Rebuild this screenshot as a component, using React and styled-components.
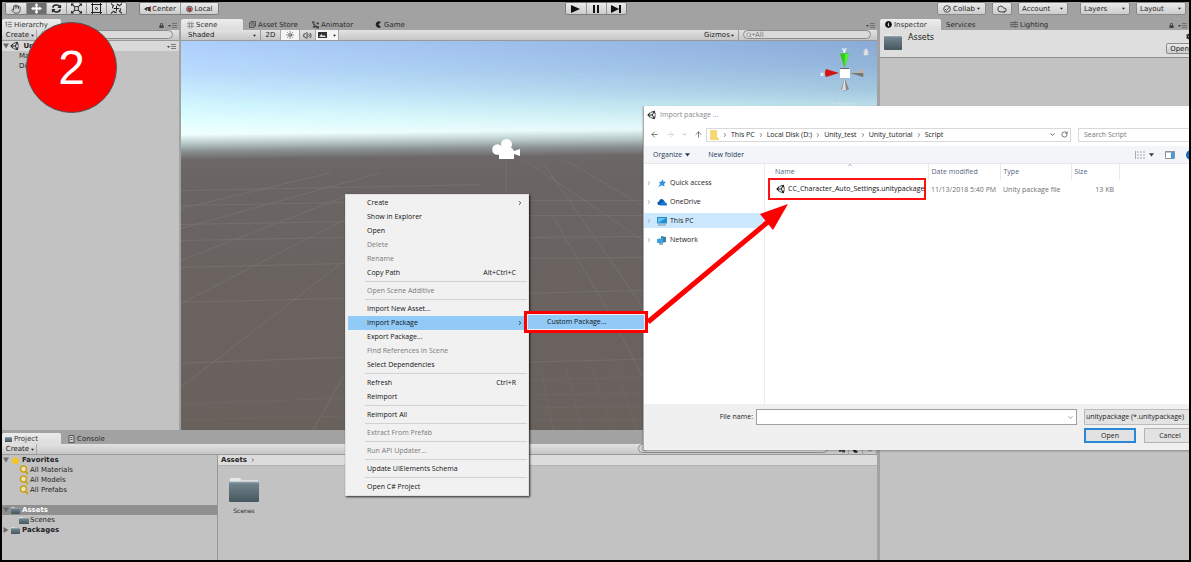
import React from "react";
import styled, { createGlobalStyle } from "styled-components";
import { FaUnity, FaStar, FaLock, FaCog, FaInfoCircle } from "react-icons/fa";
import { Hand, Cloud, ChevronRight, ChevronDown, ChevronUp, ArrowLeft, ArrowRight, ArrowUp, RotateCw, Search, Sun, Volume2 } from "lucide-react";

const GlobalStyle = createGlobalStyle`
  * {
    box-sizing: border-box;
  }
  body {
    margin: 0;
    background: black;
  }
  button, input, select {
    font: inherit;
    color: inherit;
    margin: 0;
    padding: 0;
    border: none;
    background: none;
  }
  svg {
    display: block;
    flex: none;
  }
`;

const Frame = styled.div`
  position: relative;
  display: flex;
  flex-direction: column;
  height: 100vh;
  min-height: 500px;
  border: 2px solid black;
  overflow: hidden;
  background: #a2a2a2;
  color: #222;
  font: 7px/10px "DejaVu Sans", sans-serif;
  white-space: nowrap;
`;

/* ---------- editor chrome ---------- */

const MainBar = styled.header`
  display: grid;
  grid-template-columns: 1fr auto 1fr;
  height: 17px;
  padding: 0 3px 4px 3px;
`;

const BarSide = styled.div`
  display: flex;
  gap: ${({ gap }) => gap}px;
  justify-content: ${({ end }) => (end ? "flex-end" : "flex-start")};
`;

const Segments = styled.div`
  display: flex;
  border: 1px solid #7c7c7c;
  border-radius: 2px;
  overflow: hidden;
`;

const Segment = styled.button`
  display: flex;
  align-items: center;
  justify-content: center;
  gap: 1px;
  width: ${({ w }) => w || 20}px;
  color: #222;
  background: ${({ on }) => (on ? "#6e6e6e" : "linear-gradient(#eaeaea, #cdcdcd)")};
  & + & {
    border-left: 1px solid #979797;
  }
`;

const RoundButton = styled.button`
  display: flex;
  align-items: center;
  justify-content: center;
  gap: 2px;
  width: ${({ w }) => w}px;
  height: ${({ h }) => h || 13}px;
  border: 1px solid #8a8a8a;
  border-radius: 2px;
  background: linear-gradient(#eaeaea, #cdcdcd);
`;

const SelectBox = styled.label`
  display: flex;
  align-items: center;
  width: ${({ w }) => w}px;
  padding: 0 4px 0 3px;
  ${({ flat }) =>
    flat
      ? "border-right: 1px solid #9a9a9a;"
      : "border: 1px solid #8a8a8a; border-radius: 2px; background: linear-gradient(#eaeaea, #cdcdcd);"}
  select {
    flex: 1;
    min-width: 0;
    appearance: none;
    outline: none;
  }
`;

const Workspace = styled.main`
  flex: 1;
  display: flex;
  gap: 3px;
  min-height: 0;
`;

const LeftArea = styled.div`
  flex: 1;
  min-width: 0;
  display: flex;
  flex-direction: column;
  gap: 3px;
`;

const TopArea = styled.div`
  flex: 1;
  display: flex;
  gap: 2px;
  min-height: 0;
`;

const Panel = styled.section`
  display: flex;
  flex-direction: column;
  min-width: 0;
  background: #c2c2c2;
  flex: ${({ basis }) => (basis ? `0 0 ${basis}px` : 1)};
`;

const TabStrip = styled.div`
  display: flex;
  align-items: stretch;
  height: 11px;
  background: #a2a2a2;
`;

const Tab = styled.button`
  display: flex;
  align-items: center;
  gap: 2px;
  width: ${({ w }) => w}px;
  padding: 0 ${({ pad }) => pad || 4}px;
  border-radius: 2px 2px 0 0;
  color: ${({ on }) => (on ? "#333" : "#2c2c2c")};
  background: ${({ on }) => (on ? "linear-gradient(#ececec, #dcdcdc)" : "none")};
`;

const TabTools = styled.div`
  display: flex;
  align-items: flex-end;
  gap: 4px;
  margin-left: auto;
  padding: 0 2px 2px;
  color: #444;
`;

const ToolRow = styled.div`
  display: flex;
  align-items: stretch;
  height: 11px;
  padding-left: ${({ pad }) => pad || 2}px;
  background: linear-gradient(#e2e2e2, #c6c6c6);
  border-bottom: 1px solid #999;
`;

const ToolButton = styled.button`
  display: flex;
  align-items: center;
  justify-content: center;
  gap: 2px;
  width: ${({ w }) => w}px;
  border-right: 1px solid #a5a5a5;
  background: ${({ on }) => (on ? "#f5f5f5" : "none")};
`;

const Fill = styled.div`
  flex: 1;
`;

const SearchField = styled.label`
  display: flex;
  align-items: center;
  flex: ${({ w }) => (w ? `0 0 ${w}px` : 1)};
  height: 9px;
  margin: 0 6px 0 4px;
  padding: 0 4px 0 2px;
  border: 1px solid #8c8c8c;
  border-radius: 5px;
  background: #dadada;
  color: #777;
  input {
    flex: 1;
    min-width: 0;
    height: 7px;
    outline: none;
  }
`;

const TreeRow = styled.div`
  display: flex;
  align-items: center;
  gap: ${({ bold }) => (bold ? 2 : 1)}px;
  height: 10px;
  padding-left: ${({ depth }) => (depth ? 17 : 1)}px;
  font-weight: ${({ bold }) => (bold ? "bold" : "normal")};
  color: ${({ on }) => (on ? "#fff" : "#222")};
  background: ${({ on }) => (on ? "#8f8f8f" : "none")};
`;

const SceneRow = styled(TreeRow)`
  justify-content: space-between;
  padding-right: 3px;
  background: #d9d9d9;
  span {
    display: flex;
    align-items: center;
    gap: 1px;
  }
`;

const SceneView = styled.div`
  position: relative;
  flex: 1;
  min-height: 0;
  overflow: hidden;
  background: #69615d;
`;

const SceneArt = styled.svg`
  width: 100%;
  height: 100%;
`;

const Gizmo = styled.svg`
  position: absolute;
  top: 5px;
  right: 1px;
`;

const CameraGizmo = styled.svg`
  position: absolute;
  left: 311px;
  top: 98px;
`;

const ProjectPanel = styled.section`
  display: flex;
  flex-direction: column;
  background: #c2c2c2;
`;

const ProjectBody = styled.div`
  display: flex;
  height: 105px;
`;

const ProjectTree = styled.div`
  width: 216px;
  border-right: 1px solid #969696;
`;

const Spacer = styled.div`
  height: 10px;
`;

const ProjectFiles = styled.div`
  flex: 1;
`;

const Breadcrumb = styled.div`
  display: flex;
  align-items: center;
  gap: 4px;
  height: 11px;
  padding-left: 3px;
  font-weight: bold;
  background: #dcdcdc;
  border-bottom: 1px solid #b2b2b2;
`;

const FolderTile = styled.button`
  display: flex;
  flex-direction: column;
  align-items: center;
  gap: 4px;
  margin: 11px 0 0 11px;
  font-size: 6px;
`;

const InspectorHead = styled.div`
  display: flex;
  gap: 6px;
  height: 28px;
  padding: 3px 0 0 4px;
  background: #dedede;
  border-bottom: 1px solid #8d8d8d;
  font-size: 8px;
`;

const HeadActions = styled.div`
  display: flex;
  flex-direction: column;
  align-items: flex-end;
  gap: 3px;
  margin: 0 -4px 0 auto;
  font-size: 7px;
`;

/* ---------- context menu ---------- */

const Menu = styled.ul`
  position: absolute;
  left: 343px;
  top: 192px;
  width: 184px;
  margin: 0;
  padding: 1px 1px 1px 2px;
  list-style: none;
  background: #f1f1f1;
  border: 1px solid #e0e0e0;
  box-shadow: 1px 1px 2px rgba(0, 0, 0, 0.8);
  font: 7px/14px "Open Sans", sans-serif;
`;

const MenuItem = styled.button`
  display: flex;
  align-items: center;
  width: 100%;
  height: 14px;
  padding: 0 4px 0 19px;
  text-align: left;
  color: #111;
  background: ${({ on }) => (on ? "#91c9f7" : "none")};
  &:disabled {
    color: #7b7b7b;
  }
  kbd {
    margin: 0 7px 0 auto;
    font: inherit;
  }
  svg {
    margin-left: auto;
  }
`;

const Divider = styled.li`
  height: 4px;
  margin-left: 17px;
  background: linear-gradient(#f1f1f1 1px, #d2d2d2 1px, #d2d2d2 2px, #f1f1f1 2px);
`;

const SubMenu = styled.div`
  position: absolute;
  left: 522px;
  top: 309px;
  width: 124px;
  padding: 1px;
  border: 3px solid #fd0000;
  background: #f1f1f1;
  font: 7px/14px "Open Sans", sans-serif;
`;

/* ---------- file dialog ---------- */

const Dialog = styled.section`
  position: absolute;
  left: 641px;
  right: -20px;
  top: 104px;
  border-left: 1px solid #aaa;
  background: white;
  color: #222;
  font: 7px/12px "Open Sans", sans-serif;
  box-shadow: 0 1px 2px rgba(0, 0, 0, 0.3);
`;

const DialogTitle = styled.h2`
  display: flex;
  align-items: center;
  gap: 3px;
  height: 18px;
  margin: 0;
  padding-left: 3px;
  font-size: 7px;
  font-weight: normal;
  color: #888;
  svg {
    color: #222;
  }
`;

const AddressRow = styled.div`
  display: flex;
  align-items: center;
  height: 22px;
  padding-left: 6px;
  padding-bottom: 1px;
`;

const NavArrows = styled.div`
  display: flex;
  align-items: center;
  justify-content: space-between;
  width: 53px;
  margin-right: 3px;
  color: #555;
`;

const PathBox = styled.nav`
  flex: 1;
  display: flex;
  align-items: center;
  gap: 3px;
  height: 14px;
  padding: 0 2px 0 3px;
  border: 1px solid #d9d9d9;
`;

const PathTools = styled.div`
  display: flex;
  gap: 5px;
  margin-left: auto;
`;

const DialogSearch = styled.input`
  width: 131px;
  height: 14px;
  margin-left: 7px;
  padding: 0 5px;
  border: 1px solid #d9d9d9;
  &::placeholder {
    color: #777;
    opacity: 1;
  }
`;

const CommandBar = styled.div`
  display: flex;
  align-items: center;
  gap: 18px;
  height: 18px;
  padding: 0 13px 0 9px;
  background: #f3f5f8;
  border-bottom: 1px solid #e6e8ec;
  color: #23395b;
  button {
    display: flex;
    align-items: center;
    gap: 3px;
  }
`;

const ViewTools = styled.div`
  display: flex;
  align-items: center;
  gap: 11px;
  margin-left: auto;
`;

const DialogBody = styled.div`
  display: flex;
  height: 240px;
`;

const Places = styled.nav`
  display: flex;
  flex-direction: column;
  gap: 4px;
  width: 121px;
  padding-top: 11px;
  border-right: 1px solid #ececec;
`;

const Place = styled.button`
  display: flex;
  align-items: center;
  gap: 3px;
  height: 15px;
  padding-left: 2px;
  background: ${({ on }) => (on ? "#cce8ff" : "none")};
  svg:first-child {
    color: #888;
    margin-right: 2px;
  }
`;

const FileTable = styled.table`
  align-self: flex-start;
  width: 354px;
  table-layout: fixed;
  border-collapse: collapse;
  color: #707070;
  th {
    height: 16px;
    padding: 0 0 0 3px;
    text-align: left;
    font-weight: normal;
    color: #53657e;
    border-right: 1px solid #e8e8e8;
  }
  th:first-child {
    padding-left: 10px;
  }
  td {
    padding: 0 0 0 3px;
  }
  td:last-child {
    padding-right: 5px;
    text-align: right;
  }
`;

const SortHead = styled.div`
  position: relative;
  svg {
    position: absolute;
    left: 72px;
    top: -4px;
  }
`;

const FileName = styled.div`
  display: flex;
  align-items: center;
  gap: 2px;
  height: 22px;
  margin: -2px 2px 0 0;
  padding-left: 6px;
  border: 2px solid #f11;
  color: #111;
`;

const DialogFooter = styled.footer`
  display: grid;
  grid-template-columns: 112px 1fr 125px;
  align-items: center;
  gap: 3px 0;
  height: 46px;
  padding: 5px 0 7px;
  background: #f0f0f0;
  label {
    padding-right: 3px;
    text-align: right;
  }
`;

const FileInput = styled.div`
  display: flex;
  align-items: center;
  height: 16px;
  margin-right: 7px;
  padding: 0 2px;
  border: 1px solid #a0a0a0;
  background: white;
  input {
    flex: 1;
    outline: none;
  }
`;

const TypeSelect = styled.select`
  height: 16px;
  padding-left: 1px;
  border: 1px solid #bbb;
  background: #e3e3e3;
  appearance: none;
`;

const DialogButtons = styled.div`
  grid-column: 3;
  display: flex;
  gap: 8px;
`;

const DialogButton = styled.button`
  width: 52px;
  height: 15px;
  border: ${({ main }) => (main ? "2px solid #2b86d6" : "1px solid #b4b4b4")};
  background: #e2e2e2;
  line-height: 10px;
`;

/* ---------- annotations ---------- */

const StepBadge = styled.div`
  position: absolute;
  left: 24px;
  top: 20px;
  width: 91px;
  height: 91px;
  border: 1px solid #555;
  border-radius: 50%;
  background: #fd0000;
  color: white;
  font: 48px/90px "Liberation Sans", sans-serif;
  text-align: center;
`;

const Arrow = styled.svg`
  position: absolute;
  left: 644px;
  top: 200px;
`;

/* ---------- drawings ---------- */

const Caret = ({ size = 3 }) => (
  <svg width={size} height={size} viewBox="0 0 4 4">
    <path d="M0 1h4L2 3.5z" fill="currentColor" />
  </svg>
);

const Triangle = ({ open }) => (
  <svg width="6" height="6" viewBox="0 0 6 6">
    <path d={open ? "M0 .5h6L3 5.5z" : "M.5 0v6l5-3z"} fill="#6c6c6c" />
  </svg>
);

const PanelMenu = () => (
  <svg width="9" height="5" viewBox="0 0 9 5">
    <path d="M0 2h3L1.500 4z" fill="#444" />
    <path d="M4 .5h5M4 2.500h5M4 4.500h5" stroke="#666" strokeWidth=".8" />
  </svg>
);

const Folder = ({ w, h }) => (
  <svg width={w} height={h} viewBox="0 0 30 24" preserveAspectRatio="none">
    <defs>
      <linearGradient id="folder" x1="0" y1="0" x2="0" y2="1">
        <stop offset="0" stopColor="#748790" />
        <stop offset="1" stopColor="#46565f" />
      </linearGradient>
    </defs>
    <path d="M1 5V2q0-1 1-1h9l2 2h15q1 0 1 1v4H1z" fill="#e6e8e8" />
    <rect y="4.500" width="30" height="19.500" rx="1.500" fill="url(#folder)" />
    <path d="M1 5.500h28" stroke="#8fa0a8" />
  </svg>
);

const Lens = () => (
  <svg width="10" height="10" viewBox="0 0 10 10" fill="none">
    <circle cx="4.500" cy="4" r="3" fill="#eee5b8" stroke="#c9a21a" strokeWidth="1.500" />
    <path d="M6.500 6.500L9 9" stroke="#c9a21a" strokeWidth="1.800" />
  </svg>
);

const toolIcons = {
  move: (
    <svg width="11" height="11" viewBox="0 0 12 12">
      <path d="M6 0l2.200 2.800H7V5h2.200V3.800L12 6 9.200 8.200V7H7v2.200h1.200L6 12 3.800 9.200H5V7H2.800v1.200L0 6l2.800-2.200V5H5V2.800H3.800z" fill="#fff" />
    </svg>
  ),
  rotate: (
    <svg width="11" height="11" viewBox="0 0 12 12" fill="none" stroke="#222" strokeWidth="1.800">
      <path d="M2 5C2.500 1.800 7.500 1.200 9.500 3.800M10 7C9.500 10.200 4.500 10.800 2.500 8.200" />
      <path d="M11 1.500v4H7zM1 10.500v-4h4z" fill="#222" stroke="none" />
    </svg>
  ),
  scale: (
    <svg width="11" height="11" viewBox="0 0 12 12" fill="none" stroke="#222">
      <rect x="4" y="4" width="4" height="4" />
      <path d="M1 1.500l3 2.500M11 1.500L8 4M1 10.500l3-2.500M11 10.500L8 8" strokeWidth="1.200" />
      <path d="M0 .5h3.500L0 3.500zM12 .5H8.500L12 3.500zM0 11.500h3.500L0 8.500zM12 11.500H8.500L12 8.500z" fill="#222" stroke="none" />
    </svg>
  ),
  rect: (
    <svg width="11" height="11" viewBox="0 0 11 11" fill="none" stroke="#222">
      <path d="M1.500 0v11M9.500 0v11M0 1.500h11M0 9.500h11" />
      <circle cx="5.500" cy="5.500" r="1" />
    </svg>
  ),
  transform: (
    <svg width="11" height="11" viewBox="0 0 12 12" fill="none" stroke="#222">
      <circle cx="6" cy="6" r="4.500" strokeDasharray="4 3" strokeWidth="1.200" />
      <path d="M6 3v6M3 6h6M0 .5l2 2M12 .5l-2 2M0 11.500l2-2M12 11.500l-2-2" strokeWidth="1.100" />
    </svg>
  ),
};

const SmallGrid = () => (
  <svg width="7" height="8" viewBox="0 0 8 8">
    <path d="M2.500 0v8M5.500 0v8M0 2.500h8M0 5.500h8" stroke="#888" />
  </svg>
);

const ListIcon = () => (
  <svg width="7" height="7" viewBox="0 0 8 7">
    <path d="M0 1h2M3 1h5M3 3.500h5M3 6h5M1.500 1v5" stroke="#777" />
  </svg>
);

const StoreIcon = () => (
  <svg width="7" height="7" viewBox="0 0 7 7" fill="none" stroke="#444">
    <path d="M.5 2h4.500v4.500H.5zM2 2V.5h4.500V5H5M2.800 3v2.500" strokeWidth=".8" />
  </svg>
);

const AnimatorIcon = () => (
  <svg width="7" height="8" viewBox="0 0 8 8" fill="#444">
    <path d="M0 0h3v2H0zM5 1h3v2H5zM1 5h3v2H1zM5 5h3v3H5zM2 2l4 4-1 1-4-4z" />
  </svg>
);

const GameIcon = () => (
  <svg width="7" height="7" viewBox="0 0 7 7">
    <path d="M6 1A3.200 3.200 0 1 0 6 6L3.500 3.500z" fill="#222" />
  </svg>
);

const PictureIcon = () => (
  <svg width="9" height="6" viewBox="0 0 9 6">
    <path d="M0 0h9v6H0z" fill="#333" />
    <path d="M1 5l2.500-3L5 4l1-1 2 2z" fill="#ddd" />
  </svg>
);

const SlidersIcon = () => (
  <svg width="8" height="7" viewBox="0 0 8 7">
    <path d="M0 1.500h8M0 3.500h8M0 5.500h8M5 0v3M2 2.500v2M5 4.500V7" stroke="#555" strokeWidth=".8" />
  </svg>
);

function Scenery() {
  return (
    <SceneArt viewBox="0 0 696 390" preserveAspectRatio="none">
      <defs>
        <linearGradient id="sky" gradientUnits="userSpaceOnUse" x1="0" y1="0" x2="4" y2="390">
          <stop offset="0" stopColor="#aecffc" />
          <stop offset=".08" stopColor="#b9dcfd" />
          <stop offset=".17" stopColor="#d3f8ff" />
          <stop offset=".21" stopColor="#e2ffff" />
          <stop offset=".24" stopColor="#f0ffff" />
          <stop offset=".262" stopColor="#bccccc" />
          <stop offset=".283" stopColor="#8b9293" />
          <stop offset=".305" stopColor="#6d6868" />
          <stop offset=".36" stopColor="#6a6463" />
          <stop offset="1" stopColor="#69615c" />
        </linearGradient>
        <linearGradient id="dusk" x1="0" y1="0" x2="1" y2="0">
          <stop offset="0" stopColor="#3d5d9c" stopOpacity="0" />
          <stop offset="1" stopColor="#3d5d8c" stopOpacity=".34" />
        </linearGradient>
        <linearGradient id="fade" x1="0" y1="0" x2="0" y2="1">
          <stop offset="0" stopColor="#fff" />
          <stop offset=".5" stopColor="#ccc" />
          <stop offset="1" stopColor="#000" />
        </linearGradient>
        <mask id="duskMask">
          <rect width="696" height="100" fill="url(#fade)" />
        </mask>
      </defs>
      <rect width="696" height="390" fill="url(#sky)" />
      <rect width="696" height="100" fill="url(#dusk)" mask="url(#duskMask)" />
      <g stroke="#85827f" strokeWidth=".8" opacity=".5" fill="none">
        <path d="M0 227L166 223M0 262l164-4M0 323l164-6M0 200l164-3M0 184l164-3M0 165l164-3M0 150l300-6" />
        <path d="M0 220l164-64M0 263l164-84M0 347l164-127M132 390l32-56M0 188L200 132M0 168L150 132M325 120v34" />
        <path d="M345 253l117-3M345 218l117-1M345 197l117-1M345 322l117-3M345 175h117M345 160h117" />
        <path d="M345 120l117 80M372 176l54 93 36 68M362 122l100 145M385 120l77 45" />
      </g>
      <g stroke="#85827f" strokeWidth=".5" opacity=".35">
        <path d="M345 340l117-3M345 355l117-2M345 368l117-2M345 380h117M360 330l12 60M385 328l16 62M410 326l20 64M432 324l24 66M0 380l164-4M0 364l164-6" />
      </g>
    </SceneArt>
  );
}

/* ---------- parts ---------- */

function Dropdown({ label, w, flat }) {
  return (
    <SelectBox w={w} flat={flat}>
      <select aria-label={label}>
        <option>{label}</option>
      </select>
      <Caret />
    </SelectBox>
  );
}

function TopToolbar() {
  return (
    <MainBar>
      <BarSide gap={12}>
        <Segments>
          <Segment aria-label="Hand"><Hand size={10} strokeWidth={1.6} /></Segment>
          <Segment aria-label="Move" on>{toolIcons.move}</Segment>
          <Segment aria-label="Rotate">{toolIcons.rotate}</Segment>
          <Segment aria-label="Scale">{toolIcons.scale}</Segment>
          <Segment aria-label="Rect">{toolIcons.rect}</Segment>
          <Segment aria-label="Transform">{toolIcons.transform}</Segment>
        </Segments>
        <Segments>
          <Segment w={40}>
            <svg width="7" height="6" viewBox="0 0 7 6"><path d="M0 3l3-2v4zM3 1h3v4H4z" fill="#333" /><path d="M6.500 0v6" stroke="#b44" /></svg>
            Center
          </Segment>
          <Segment w={38}>
            <svg width="7" height="8" viewBox="0 0 8 8"><circle cx="4" cy="4" r="3.300" fill="#aaa" stroke="#555" /><path d="M2 3l2-1 2 1v2.500L4 7 2 5.500z" fill="#a33" /></svg>
            Local
          </Segment>
        </Segments>
      </BarSide>
      <Segments>
        <Segment aria-label="Play"><svg width="9" height="8" viewBox="0 0 9 8"><path d="M0 0l9 4-9 4z" fill="#111" /></svg></Segment>
        <Segment aria-label="Pause"><svg width="6" height="8" viewBox="0 0 6 8"><path d="M0 0h2v8H0zM4 0h2v8H4z" fill="#111" /></svg></Segment>
        <Segment aria-label="Step"><svg width="10" height="8" viewBox="0 0 10 8"><path d="M0 0l8 4-8 4zM8 0h2v8H8z" fill="#111" /></svg></Segment>
      </Segments>
      <BarSide gap={6} end>
        <RoundButton w={49}>
          <svg width="8" height="8" viewBox="0 0 8 8" fill="none" stroke="#555"><circle cx="4" cy="4" r="3.300" /><path d="M2 4l1.500 1.500L7 1.500" /></svg>
          Collab <Caret />
        </RoundButton>
        <RoundButton w={20} aria-label="Cloud"><Cloud size={10} /></RoundButton>
        <Dropdown label="Account" w={50} />
        <span />
        <Dropdown label="Layers" w={50} />
        <Dropdown label="Layout" w={50} />
      </BarSide>
    </MainBar>
  );
}

function Hierarchy() {
  return (
    <Panel basis={177}>
      <TabStrip>
        <Tab on w={59} pad={3}><ListIcon />Hierarchy</Tab>
        <TabTools><FaLock size={5} /><PanelMenu /></TabTools>
      </TabStrip>
      <ToolRow>
        <ToolButton w={33}>Create <Caret /></ToolButton>
        <SearchField><input aria-label="Search hierarchy" /></SearchField>
      </ToolRow>
      <SceneRow bold>
        <span><Triangle open /><FaUnity size={10} />&nbsp;Untitled</span>
        <PanelMenu />
      </SceneRow>
      <TreeRow depth={1}>Main</TreeRow>
      <TreeRow depth={1}>Direct</TreeRow>
    </Panel>
  );
}

function Scene() {
  return (
    <Panel>
      <TabStrip>
        <Tab on w={62} pad={6}><SmallGrid />Scene</Tab>
        <Tab w={63} pad={6}><StoreIcon />Asset Store</Tab>
        <Tab w={63} pad={6}><AnimatorIcon />Animator</Tab>
        <Tab w={50} pad={6}><GameIcon />Game</Tab>
        <TabTools><PanelMenu /></TabTools>
      </TabStrip>
      <ToolRow pad={4}>
        <Dropdown label="Shaded" w={76} flat />
        <ToolButton w={20}>2D</ToolButton>
        <ToolButton w={19} on aria-label="Lighting"><Sun size={8} /></ToolButton>
        <ToolButton w={16} aria-label="Audio"><Volume2 size={9} /></ToolButton>
        <ToolButton w={23} on aria-label="Effects"><PictureIcon />&nbsp;<Caret /></ToolButton>
        <Fill />
        <Dropdown label="Gizmos" w={38} flat />
        <SearchField w={128}>
          <Search size={6} /><Caret />
          <input aria-label="Search scene" defaultValue="All" />
        </SearchField>
      </ToolRow>
      <SceneView>
        <Scenery />
        <CameraGizmo width="28" height="20" viewBox="0 0 28 20">
          <g fill="#fff">
            <circle cx="5.500" cy="10.500" r="5.300" />
            <circle cx="14.500" cy="5.500" r="5.500" />
            <path d="M5 9h15l2 3 6-2v7l-6-2v5H7v-6z" />
          </g>
        </CameraGizmo>
        <Gizmo width="56" height="64" viewBox="0 0 56 64">
          <text x="22" y="6" fontSize="7" fontWeight="bold" fill="#fff">y</text>
          <text x="0" y="30" fontSize="6" fontWeight="bold" fill="#fff">x</text>
          <path d="M20 8q4.500-2 9 0l-4.500 14z" fill="#35c81c" />
          <path d="M25 8l4 0-4.500 14z" fill="#54ee36" />
          <path d="M6 23q-2 4 0 8l13-4z" fill="#d31414" />
          <path d="M43 23q2 4 0 8l-13-4z" fill="#b4b4b4" />
          <path d="M43 27q1 2 0 4l-13-4z" fill="#777" />
          <path d="M21 43q4 3 8 0L24.500 32z" fill="#888" />
          <path d="M22 44l4 0-1.500-12z" fill="#ddd" />
          <rect x="20" y="23" width="10" height="9" fill="#fff" />
          <path d="M20 22.500h9" stroke="#5a6570" />
          <path d="M44 5h4v4h-4zM45 5V3h2v2" fill="#ddd" stroke="#ddd" strokeWidth=".6" />
          <text x="9" y="61" fontSize="7" fill="#cfe2f0">&lt; Persp</text>
        </Gizmo>
      </SceneView>
    </Panel>
  );
}

function Project() {
  return (
    <ProjectPanel>
      <TabStrip>
        <Tab on w={59} pad={3}><Folder w={7} h={6} />Project</Tab>
        <Tab w={60} pad={7}>
          <svg width="7" height="8" viewBox="0 0 7 8" fill="#ccc" stroke="#555"><path d="M1 .5h5v7H1zM2.500 2.500h2M2.500 4.500h2" /></svg>
          Console
        </Tab>
      </TabStrip>
      <ToolRow>
        <ToolButton w={33}>Create <Caret /></ToolButton>
        <Fill />
        <SearchField w={190}><Search size={6} /><input aria-label="Search project" /></SearchField>
        <ToolButton w={15} aria-label="Filter by type"><AnimatorIcon /></ToolButton>
        <ToolButton w={14} aria-label="Filter by label"><GameIcon /></ToolButton>
        <ToolButton w={14} aria-label="Save search"><FaStar size={6} color="#999" /></ToolButton>
      </ToolRow>
      <ProjectBody>
        <ProjectTree>
          <TreeRow bold><Triangle open /><FaStar size={9} color="#f5c518" />Favorites</TreeRow>
          <TreeRow depth={1}><Lens />All Materials</TreeRow>
          <TreeRow depth={1}><Lens />All Models</TreeRow>
          <TreeRow depth={1}><Lens />All Prefabs</TreeRow>
          <Spacer />
          <TreeRow bold on><Triangle open /><Folder w={9} h={7} />Assets</TreeRow>
          <TreeRow depth={1}><Folder w={10} h={7} />Scenes</TreeRow>
          <TreeRow bold><Triangle /><Folder w={9} h={7} />Packages</TreeRow>
        </ProjectTree>
        <ProjectFiles>
          <Breadcrumb>Assets <ChevronRight size={4} strokeWidth={4} /></Breadcrumb>
          <FolderTile><Folder w={30} h={25} />Scenes</FolderTile>
        </ProjectFiles>
      </ProjectBody>
    </ProjectPanel>
  );
}

function Inspector() {
  return (
    <Panel basis={309}>
      <TabStrip>
        <Tab on w={61} pad={5}><FaInfoCircle size={7} color="#111" />Inspector</Tab>
        <Tab w={65} pad={5}>Services</Tab>
        <Tab w={60}><SlidersIcon />Lighting</Tab>
        <TabTools><FaLock size={5} /><PanelMenu /></TabTools>
      </TabStrip>
      <InspectorHead>
        <Folder w={18} h={17} />
        Assets
        <HeadActions>
          <FaCog size={7} color="#222" />
          <RoundButton w={27} h={11}>Open</RoundButton>
        </HeadActions>
      </InspectorHead>
    </Panel>
  );
}

const menuItems = [
  { label: "Create", sub: true },
  { label: "Show in Explorer" },
  { label: "Open" },
  { label: "Delete", off: true },
  { label: "Rename", off: true },
  { label: "Copy Path", keys: "Alt+Ctrl+C" },
  null,
  { label: "Open Scene Additive", off: true },
  null,
  { label: "Import New Asset..." },
  { label: "Import Package", sub: true, on: true },
  { label: "Export Package..." },
  { label: "Find References In Scene", off: true },
  { label: "Select Dependencies" },
  null,
  { label: "Refresh", keys: "Ctrl+R" },
  { label: "Reimport" },
  null,
  { label: "Reimport All" },
  null,
  { label: "Extract From Prefab", off: true },
  null,
  { label: "Run API Updater...", off: true },
  null,
  { label: "Update UIElements Schema" },
  null,
  { label: "Open C# Project" },
];

function ContextMenu() {
  return (
    <Menu>
      {menuItems.map((item, i) =>
        item ? (
          <li key={i}>
            <MenuItem on={item.on} disabled={item.off}>
              {item.label}
              {item.keys && <kbd>{item.keys}</kbd>}
              {item.sub && <ChevronRight size={6} strokeWidth={3} />}
            </MenuItem>
          </li>
        ) : (
          <Divider key={i} />
        )
      )}
    </Menu>
  );
}

const path = ["This PC", "Local Disk (D:)", "Unity_test", "Unity_tutorial", "Script"];

const placeIcons = {
  quick: (
    <svg width="10" height="10" viewBox="0 0 10 10"><path d="M5.500 1l1 2.500L9 4 7.200 5.800 7.500 8.500 5 7.200 1 9l2.200-3L2 4l2.500-.5z" fill="#2f94dc" /></svg>
  ),
  cloud: (
    <svg width="10" height="8" viewBox="0 0 10 8"><path d="M1 7Q-.5 4 2 3.500 3 0 6 1.500L8 4 4 7z" fill="#0b58a8" /><path d="M3 7.500Q2 5 4.500 4.500 6 2 8 4.200q2.500.3 1.800 3.300z" fill="#1179d4" /></svg>
  ),
  pc: (
    <svg width="10" height="10" viewBox="0 0 10 10"><path d="M0 1h10v6.500H0z" fill="#2a8ccc" /><path d="M1 2h8L1 7z" fill="#63c3f2" /><path d="M1 9h8" stroke="#7a8fa0" /></svg>
  ),
  net: (
    <svg width="10" height="10" viewBox="0 0 10 10"><path d="M4 1l5 1v5L4 8z" fill="#3c7fa8" /><path d="M0 4l6-1v5L0 8z" fill="#3aa3e0" /><path d="M2 9h4" stroke="#557" /></svg>
  ),
};

function ImportDialog() {
  return (
    <Dialog>
      <DialogTitle><FaUnity size={10} />Import package ...</DialogTitle>
      <AddressRow>
        <NavArrows>
          <ArrowLeft size={9} />
          <ArrowRight size={9} color="#ccc" />
          <ChevronDown size={5} />
          <ArrowUp size={9} />
        </NavArrows>
        <PathBox>
          <svg width="9" height="10" viewBox="0 0 9 10"><path d="M0 0h7v7l2 1v2H0z" fill="#f8d775" /></svg>
          {path.map((name) => (
            <React.Fragment key={name}>
              <ChevronRight size={6} strokeWidth={3} color="#555" />
              <button>{name}</button>
            </React.Fragment>
          ))}
          <PathTools><ChevronDown size={7} strokeWidth={3} color="#555" /><RotateCw size={7} strokeWidth={2} /></PathTools>
        </PathBox>
        <DialogSearch aria-label="Search Script" placeholder="Search Script" />
      </AddressRow>
      <CommandBar>
        <button>Organize <Caret size={5} /></button>
        <button>New folder</button>
        <ViewTools>
          <button aria-label="View">
            <svg width="11" height="8" viewBox="0 0 11 8"><path d="M.5 0v8M2 1h2M2 4h2M2 7h2M5 1h2M8 1h2M5 4h2M8 4h2M5 7h2M8 7h2" stroke="#a4abb4" /></svg>
            <Caret size={5} />
          </button>
          <svg width="10" height="8" viewBox="0 0 10 8"><path d="M.5 .5h9v7h-9z" fill="#fff" stroke="#8a939e" /><path d="M6 1h3v6H6z" fill="#3a9be8" /><path d="M0 1h10" stroke="#8a939e" /></svg>
          <svg width="10" height="10" viewBox="0 0 10 10"><circle cx="5" cy="5" r="5" fill="#0f6cbd" /></svg>
        </ViewTools>
      </CommandBar>
      <DialogBody>
        <Places>
          <Place><ChevronRight size={6} strokeWidth={3} />{placeIcons.quick}Quick access</Place>
          <Place><ChevronRight size={6} strokeWidth={3} />{placeIcons.cloud}OneDrive</Place>
          <Place on><ChevronRight size={6} strokeWidth={3} />{placeIcons.pc}This PC</Place>
          <Place><ChevronRight size={6} strokeWidth={3} />{placeIcons.net}Network</Place>
        </Places>
        <FileTable>
          <colgroup>
            <col width="163" />
            <col width="72" />
            <col width="71" />
            <col width="48" />
          </colgroup>
          <thead>
            <tr>
              <th><SortHead>Name<ChevronUp size={6} /></SortHead></th>
              <th>Date modified</th>
              <th>Type</th>
              <th>Size</th>
            </tr>
          </thead>
          <tbody>
            <tr>
              <td><FileName><FaUnity size={10} />CC_Character_Auto_Settings.unitypackage</FileName></td>
              <td>11/13/2018 5:40 PM</td>
              <td>Unity package file</td>
              <td>13 KB</td>
            </tr>
          </tbody>
        </FileTable>
      </DialogBody>
      <DialogFooter>
        <label htmlFor="file-name">File name:</label>
        <FileInput><input id="file-name" /><ChevronDown size={7} color="#555" /></FileInput>
        <TypeSelect aria-label="File type"><option>unitypackage (*.unitypackage)</option></TypeSelect>
        <DialogButtons>
          <DialogButton main>Open</DialogButton>
          <DialogButton>Cancel</DialogButton>
        </DialogButtons>
      </DialogFooter>
    </Dialog>
  );
}

export default function App() {
  return (
    <Frame>
      <GlobalStyle />
      <TopToolbar />
      <Workspace>
        <LeftArea>
          <TopArea>
            <Hierarchy />
            <Scene />
          </TopArea>
          <Project />
        </LeftArea>
        <Inspector />
      </Workspace>
      <ContextMenu />
      <ImportDialog />
      <SubMenu>
        <MenuItem on>Custom Package...</MenuItem>
      </SubMenu>
      <Arrow width="144" height="126" viewBox="0 0 144 126">
        <path d="M2 120L123 19" stroke="#fd0000" strokeWidth="5" />
        <path d="M142 2l-28 10 13 16z" fill="#fd0000" />
      </Arrow>
      <StepBadge>2</StepBadge>
    </Frame>
  );
}
